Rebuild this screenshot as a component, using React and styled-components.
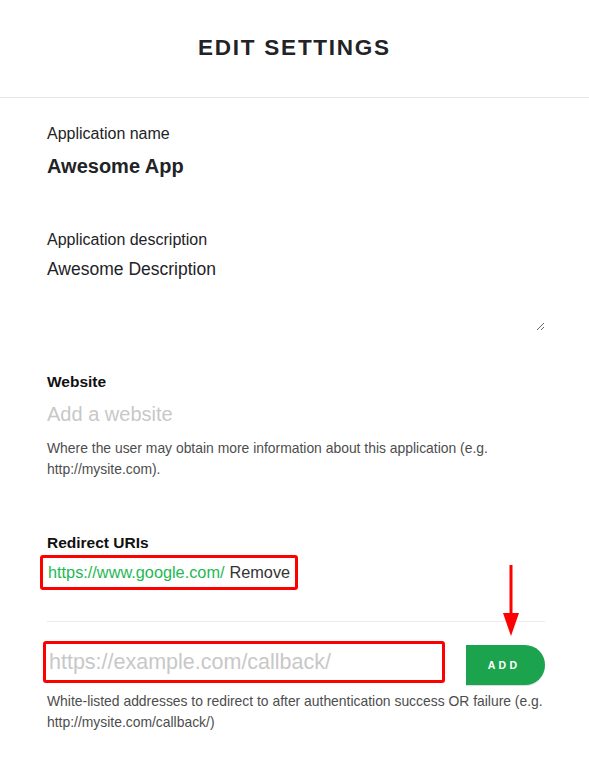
import React from "react";
import styled, { createGlobalStyle } from "styled-components";

const GlobalStyle = createGlobalStyle`
  body {
    margin: 0;
    background: #fff;
    font-family: "Liberation Sans", Arial, sans-serif;
    color: #222326;
  }
  * { box-sizing: border-box; }
`;

const Page = styled.div`
  position: relative;
  width: 589px;
  min-height: 757px;
  background: #fff;
`;

const Header = styled.header`
  display: flex;
  align-items: center;
  justify-content: center;
  height: 98px;
  border-bottom: 1px solid #e6e6e6;
  padding-bottom: 2px;
`;

const Title = styled.h1`
  margin: 0;
  font-size: 22.5px;
  font-weight: 700;
  letter-spacing: 1.75px;
  color: #222326;
`;

const Form = styled.div`
  padding: 25px 44px 0 47px;
`;

const Field = styled.div`
  margin-bottom: ${p => p.$gap || 0}px;
`;

const Label = styled.div`
  font-size: ${p => (p.$bold ? 15.5 : 16)}px;
  line-height: 22px;
  font-weight: ${p => (p.$bold ? 700 : 400)};
  color: ${p => (p.$bold ? "#111" : "#222326")};
`;

const Value = styled.div`
  margin-top: 8px;
  font-size: 20px;
  line-height: 26px;
  font-weight: 700;
  color: #222326;
`;

const TextArea = styled.textarea`
  display: block;
  width: 100%;
  height: 76px;
  margin-top: 4px;
  padding: 3px 0 0;
  border: none;
  outline: none;
  resize: vertical;
  font-family: inherit;
  font-size: 17.5px;
  line-height: 22px;
  color: #222326;
  background: transparent;
`;

const TextInput = styled.input`
  display: block;
  width: 100%;
  height: 34px;
  margin-top: ${p => p.$top || 0}px;
  padding: 0;
  border: none;
  outline: none;
  font-family: inherit;
  font-size: ${p => p.$size || 20}px;
  color: #222326;
  background: transparent;
  &::placeholder {
    color: #c8c8c8;
  }
`;

const Help = styled.p`
  margin: ${p => p.$top || 0}px 0 0;
  font-size: 13.9px;
  line-height: 21px;
  color: #4d4d4d;
`;

const Marked = styled.div`
  border: 3px solid #f00;
  border-radius: 3px;
`;

const UriRow = styled(Marked)`
  display: inline-flex;
  align-items: center;
  gap: 5px;
  height: 35px;
  margin: 1px 0 0 -7px;
  padding: 0 5px 0 5px;
  font-size: 16.3px;
`;

const UriLink = styled.span`
  color: #1db954;
`;

const RemoveLink = styled.span`
  color: #333;
  cursor: pointer;
`;

const Rule = styled.hr`
  margin: 31px 0 0;
  border: none;
  border-top: 1px solid #ebebeb;
`;

const AddRow = styled.div`
  display: flex;
  align-items: flex-start;
  gap: 21px;
  margin-top: 19px;
`;

const UriInputBox = styled(Marked)`
  flex: 0 0 402px;
  height: 42px;
  margin-left: -4px;
  display: flex;
  align-items: center;
  padding: 0 3px;
`;

const AddButton = styled.button`
  width: 80px;
  height: 40px;
  margin-top: 4px;
  border: none;
  border-radius: 0 20px 20px 0;
  background: #1ca34d;
  color: #fff;
  font-family: inherit;
  font-size: 10.5px;
  font-weight: 700;
  letter-spacing: 3.2px;
  padding-left: 3px;
  box-shadow: 0 1px 1px rgba(0, 0, 0, 0.15);
`;

const Arrow = styled.svg`
  position: absolute;
  left: 502px;
  top: 565px;
`;

const App = function App() {
    return <Page>
        <GlobalStyle />
        <Header>
            <Title>EDIT SETTINGS</Title>
        </Header>
        <Form>
            <Field $gap={50}>
                <Label>Application name</Label>
                <Value>Awesome App</Value>
            </Field>
            <Field $gap={40}>
                <Label>Application description</Label>
                <TextArea defaultValue="Awesome Description" />
            </Field>
            <Field $gap={52}>
                <Label $bold>Website</Label>
                <TextInput $top={4} placeholder="Add a website" />
                <Help $top={7}>
                    Where the user may obtain more information about this application (e.g. http://mysite.com).
                </Help>
            </Field>
            <Field>
                <Label $bold>Redirect URIs</Label>
                <UriRow>
                    <UriLink>https://www.google.com/</UriLink>
                    <RemoveLink>Remove</RemoveLink>
                </UriRow>
                <Rule />
                <AddRow>
                    <UriInputBox>
                        <TextInput $size={21.5} placeholder="https://example.com/callback/" />
                    </UriInputBox>
                    <AddButton>ADD</AddButton>
                </AddRow>
                <Help $top={6}>
                    White-listed addresses to redirect to after authentication success OR failure (e.g. http://mysite.com/callback/)
                </Help>
            </Field>
        </Form>
        {/* annotation arrow */}
        <Arrow width="18" height="72" viewBox="0 0 18 72">
            <rect x="7.5" y="0" width="3" height="50" fill="#f00" />
            <polygon points="1,48 17,48 9,71" fill="#f00" />
        </Arrow>
    </Page>;
};

export default App;
